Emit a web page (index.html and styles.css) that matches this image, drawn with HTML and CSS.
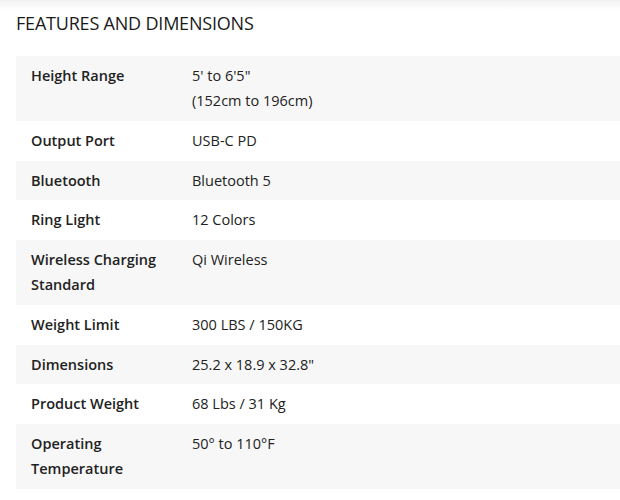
FILE: index.html
```html
<!DOCTYPE html>
<html>
<head>
<meta charset="utf-8">
<link rel="stylesheet" href="styles.css">
</head>
<body>
<div class="topshade"></div>
<section class="specs">
  <h2 class="title">FEATURES AND DIMENSIONS</h2>
  <table class="spec-table">
    <tr class="alt"><th>Height Range</th><td>5' to 6'5"<br>(152cm to 196cm)</td></tr>
    <tr><th>Output Port</th><td>USB-C PD</td></tr>
    <tr class="alt"><th>Bluetooth</th><td>Bluetooth 5</td></tr>
    <tr><th>Ring Light</th><td>12 Colors</td></tr>
    <tr class="alt"><th>Wireless Charging Standard</th><td>Qi Wireless</td></tr>
    <tr><th>Weight Limit</th><td>300 LBS / 150KG</td></tr>
    <tr class="alt"><th>Dimensions</th><td>25.2 x 18.9 x 32.8"</td></tr>
    <tr><th>Product Weight</th><td>68 Lbs / 31 Kg</td></tr>
    <tr class="alt"><th>Operating Temperature</th><td>50° to 110°F</td></tr>
  </table>
</section>
</body>
</html>
```

FILE: styles.css
```css
html, body {
  margin: 0;
  padding: 0;
  background: #ffffff;
}
body {
  font-family: "Open Sans", "Noto Sans", sans-serif;
  color: #222222;
  position: relative;
}
.topshade {
  position: absolute;
  left: 0;
  right: 0;
  top: 0;
  height: 10px;
  background: linear-gradient(#f2f2f2, #ffffff);
}
.specs {
  position: relative;
  padding: 10px 0 0 16px;
}
.title {
  margin: 0 0 20px 0;
  font-size: 18px;
  font-weight: 400;
  line-height: 26px;
  letter-spacing: -0.2px;
  color: #1a1a1a;
}
.spec-table {
  width: 100%;
  border-collapse: collapse;
  font-size: 14.5px;
  line-height: 25.33px;
}
.spec-table tr.alt {
  background: #f7f7f7;
}
.spec-table th,
.spec-table td {
  vertical-align: top;
  text-align: left;
  padding: 7px 15px 7.33px 15px;
}
.spec-table th {
  width: 131px;
  font-weight: 600;
}
.spec-table td {
  font-weight: 400;
}
```
